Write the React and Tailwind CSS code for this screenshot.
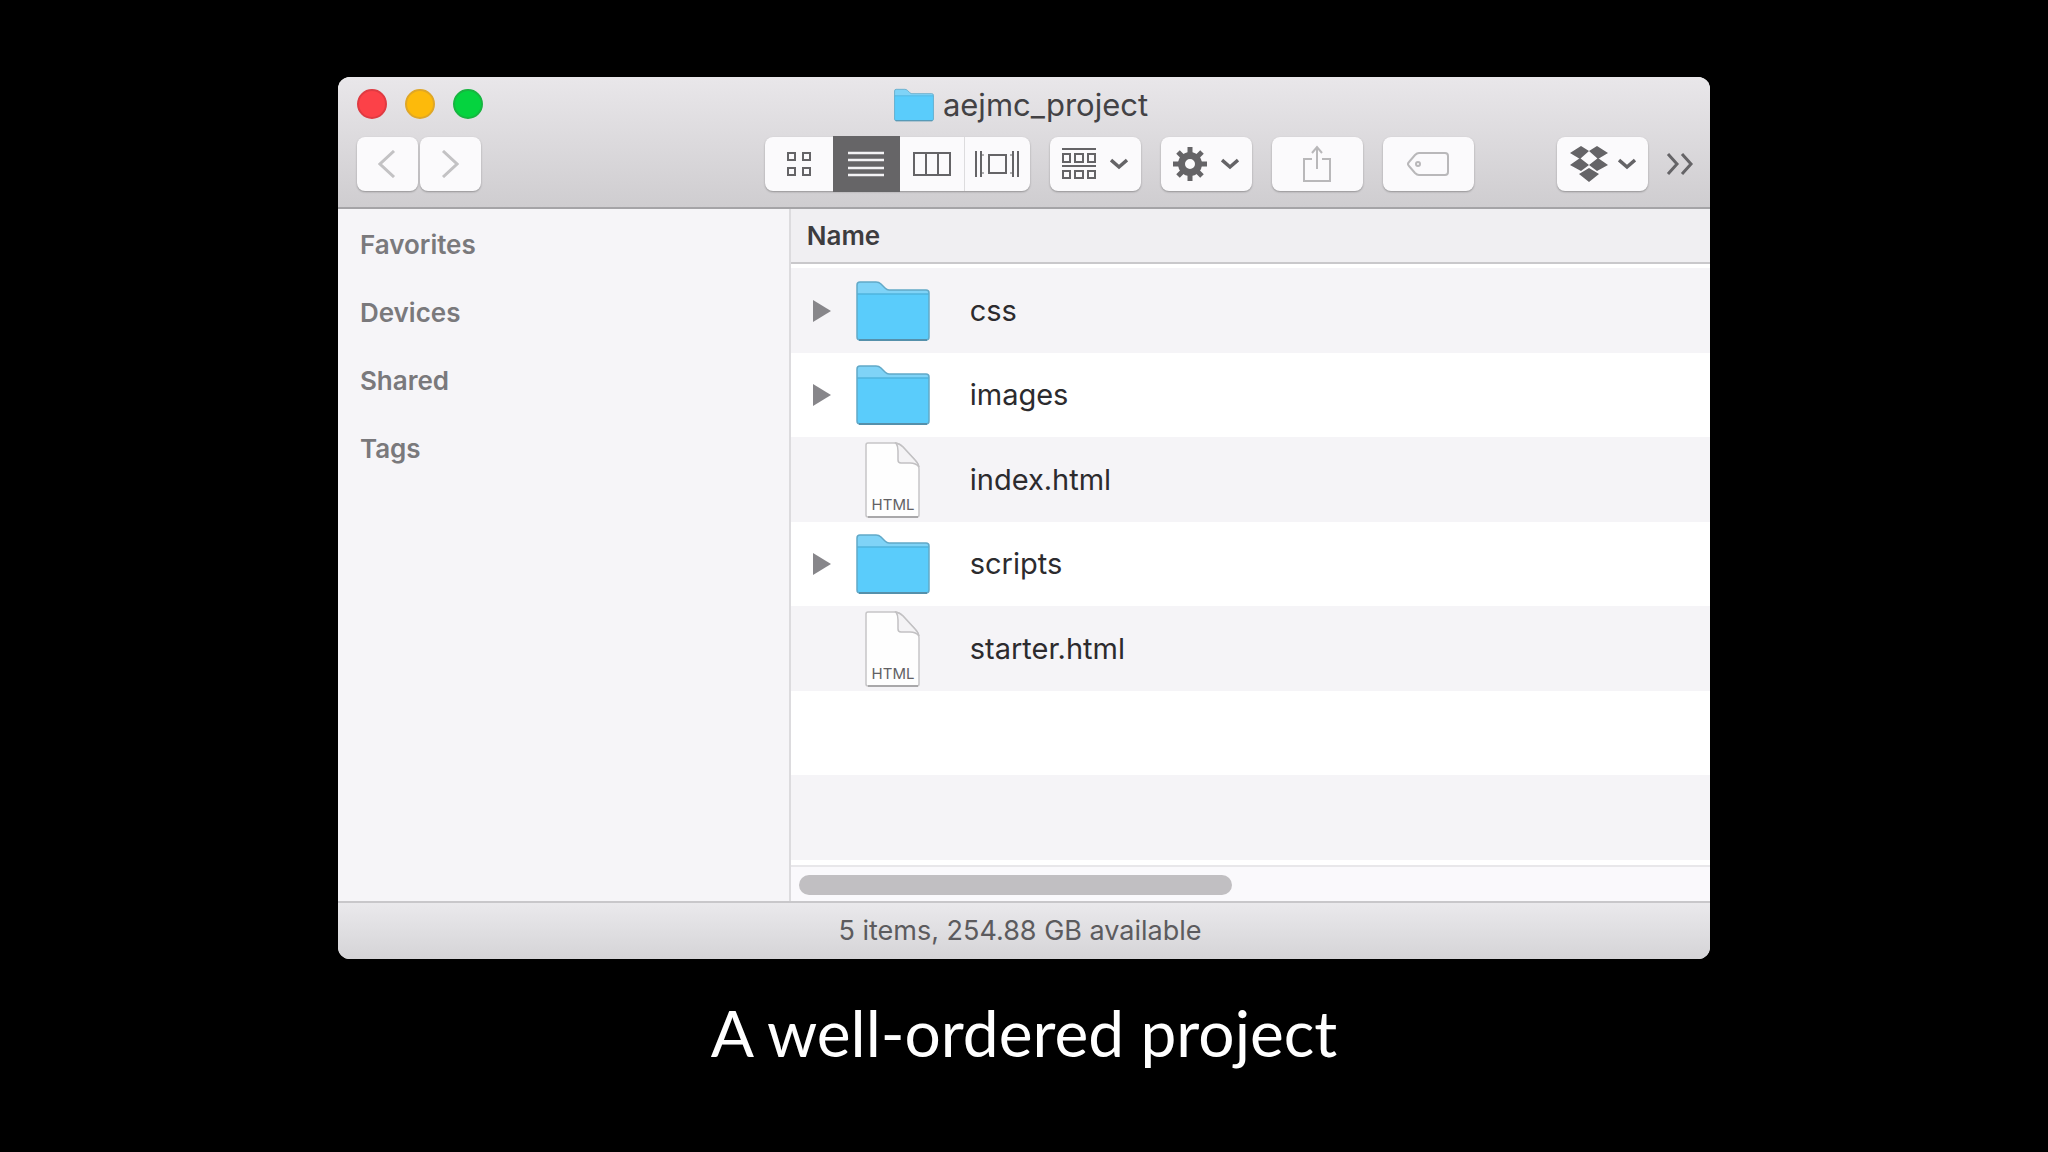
import React, { useState } from 'react';

const sidebarItems = ['Favorites', 'Devices', 'Shared', 'Tags'];

const files = [
  { name: 'css', type: 'folder' },
  { name: 'images', type: 'folder' },
  { name: 'index.html', type: 'html' },
  { name: 'scripts', type: 'folder' },
  { name: 'starter.html', type: 'html' },
];

const FolderIcon = ({ className }) => (
  <svg className={className} viewBox="0 0 74 60" fill="none">
    <path d="M1 4q0-3 3-3h16q3 0 5 2l4 4q2 2 4 2h37q3 0 3 3v44q0 3-3 3H4q-3 0-3-3z" fill="#7fd3f7" />
    <path d="M1 13h72v43q0 3-3 3H4q-3 0-3-3z" fill="#5accfb" />
    <path d="M1 13h72" stroke="#4fb4de" strokeWidth="1.5" />
    <path d="M1 4q0-3 3-3h16q3 0 5 2l4 4q2 2 4 2h37q3 0 3 3v44q0 3-3 3H4q-3 0-3-3z" stroke="#62a9c8" strokeWidth="1.5" />
    <path d="M3 59h68" stroke="#5590ab" strokeWidth="2" />
  </svg>
);

const HtmlFileIcon = () => (
  <svg className="w-14 h-[76px]" viewBox="0 0 56 76">
    <path d="M1 3q0-2 2-2h26q5 0 9 4l12 13q4 4 4 9v46q0 2-2 2H3q-2 0-2-2z" fill="#fefefe" stroke="#c6c5c7" strokeWidth="1.5" />
    <path d="M31 1q2 3 2 8v9q0 3 3 3h9q6 0 9 4q-1-4-4-7L38 5q-3-3-7-4z" fill="#f4f3f5" stroke="#c2c1c3" strokeWidth="1.5" />
    <path d="M3 75h50" stroke="#a9a8aa" strokeWidth="2" />
    <text x="28" y="68" textAnchor="middle" fontSize="15" fill="#626164" className="font-['Inter',sans-serif]">HTML</text>
  </svg>
);

const ChevronDown = () => (
  <svg className="w-[18px] h-3" viewBox="0 0 18 12" fill="none" stroke="#656467" strokeWidth="3.5">
    <path d="M1 2l8 7 8-7" />
  </svg>
);

const IconView = () => (
  <svg className="w-[26px] h-[26px]" viewBox="0 0 26 26" fill="none" stroke="#656467" strokeWidth="2">
    <path d="M2 2h7v7H2zM17 2h7v7h-7zM2 17h7v7H2zM17 17h7v7h-7z" />
  </svg>
);

const ListView = () => (
  <svg className="w-9 h-[26px]" viewBox="0 0 36 26" fill="none" stroke="#f4f3f5" strokeWidth="2.5">
    <path d="M0 2h36M0 9h36M0 17h36M0 24h36" />
  </svg>
);

const ColumnView = () => (
  <svg className="w-10 h-[26px]" viewBox="0 0 40 26" fill="none" stroke="#656467" strokeWidth="2">
    <path d="M2 2h36v22H2zM14 2v22M26 2v22" />
  </svg>
);

const CoverFlowView = () => (
  <svg className="w-11 h-[26px]" viewBox="0 0 44 26" fill="none" stroke="#656467" strokeWidth="2">
    <path d="M14 4h17v18H14z" />
    <path d="M1 0v26M43 0v26" />
    <path d="M6 0v26M38 0v26" />
    <path d="M6 4h3M6 22h3M38 4h-3M38 22h-3" strokeWidth="1" />
  </svg>
);

const ArrangeIcon = () => (
  <svg className="w-[34px] h-8" viewBox="0 0 34 32" fill="none" stroke="#656467" strokeWidth="2">
    <path d="M0 1h34M0 18h34" />
    <path d="M1 6h7v8H1zM13 6h8v8h-8zM26 6h7v8h-7zM1 23h7v7H1zM13 23h8v7h-8zM26 23h7v7h-7z" />
  </svg>
);

const GearIcon = () => (
  <svg className="w-[34px] h-[34px]" viewBox="-17 -17 34 34" fill="none" stroke="#656467">
    <circle r="8.5" strokeWidth="7" />
    <path
      d="M0-10V-17M0 10V17M-10 0H-17M10 0H17M7-7L12-12M-7 7L-12 12M7 7L12 12M-7-7L-12-12"
      strokeWidth="5"
    />
  </svg>
);

const ShareIcon = () => (
  <svg className="w-7 h-[38px]" viewBox="0 0 28 38" fill="none" stroke="#b9b8ba" strokeWidth="2">
    <path d="M9 14H1v22h26V14h-8M14 24V2M9 8l5-6 5 6" />
  </svg>
);

const TagIcon = () => (
  <svg className="w-[42px] h-6" viewBox="0 0 42 24" fill="none" stroke="#b9b8ba" strokeWidth="2">
    <path d="M12 1h26q3 0 3 3v16q0 3-3 3H12q-2 0-4-2l-6-7q-2-2 0-4l6-7q2-2 4-2z" />
    <circle cx="11" cy="12" r="2" />
  </svg>
);

const DropboxIcon = () => (
  <svg className="w-[38px] h-9" viewBox="0 0 38 36" fill="#656467">
    <path d="M11 0l8 5-9 8-10-6zM27 0l-8 5 9 8 10-6zM10 12l9 7-8 6-11-6zM28 12l-9 7 8 6 11-6zM19 22l10 6-10 8-10-8z" />
  </svg>
);

const ToolbarButton = ({ label, disabled, className = 'w-[91px] gap-[14px]', children }) => (
  <button
    type="button"
    aria-label={label}
    disabled={disabled}
    className={`h-[54px] shrink-0 rounded-lg bg-[#fbfafc] shadow-[0_1px_2px_rgba(0,0,0,0.3)] flex items-center justify-center ${className}`}
  >
    {children}
  </button>
);

const viewModes = [
  { id: 'icon', label: 'Icon view', Icon: IconView },
  { id: 'list', label: 'List view', Icon: ListView },
  { id: 'column', label: 'Column view', Icon: ColumnView },
  { id: 'cover', label: 'Cover Flow view', Icon: CoverFlowView },
];

const ViewSwitcher = () => (
  <div className="h-[54px] shrink-0 rounded-lg bg-[#fbfafc] shadow-[0_1px_2px_rgba(0,0,0,0.3)] flex items-center">
    {viewModes.map(({ id, label, Icon }) => (
      <button
        key={id}
        type="button"
        aria-label={label}
        aria-pressed={id === 'list'}
        className={`flex items-center justify-center ${
          id === 'list'
            ? 'w-[67px] h-14 bg-[#666567]'
            : id === 'cover'
            ? 'w-[66px] h-[54px] border-l border-[#dddcde]'
            : id === 'icon'
            ? 'w-[68px] h-[54px]'
            : 'w-16 h-[54px]'
        }`}
      >
        <Icon />
      </button>
    ))}
  </div>
);

const Toolbar = () => (
  <header className="h-[132px] bg-linear-to-b from-[#e9e7ea] to-[#cfcdd0] border-b-2 border-[#a5a4a7]">
    <div className="relative h-14 pr-1.5 flex items-center justify-center">
      <div className="absolute left-[19px] top-3 flex gap-[18px]">
        <button type="button" aria-label="Close" className="size-[30px] rounded-full bg-[#fc4148] border-2 border-[#df3b42]" />
        <button type="button" aria-label="Minimize" className="size-[30px] rounded-full bg-[#fdba0b] border-2 border-[#dfa727]" />
        <button type="button" aria-label="Zoom" className="size-[30px] rounded-full bg-[#05d33f] border-2 border-[#17b540]" />
      </div>
      <h1 className="flex items-center gap-[9px] text-[31px] leading-9 text-[#434245]">
        <FolderIcon className="w-10 h-[34px]" />
        aejmc_project
      </h1>
    </div>
    <div className="mt-1 flex items-center pl-[19px] pr-4">
      <div className="flex gap-[2px]">
        <ToolbarButton label="Back" className="w-[61px]">
          <svg className="w-[18px] h-7" viewBox="0 0 18 28" fill="none" stroke="#c3c2c4" strokeWidth="3">
            <path d="M16 1L2 14l14 13" />
          </svg>
        </ToolbarButton>
        <ToolbarButton label="Forward" className="w-[61px]">
          <svg className="w-[18px] h-7" viewBox="0 0 18 28" fill="none" stroke="#c3c2c4" strokeWidth="3">
            <path d="M2 1l14 13L2 27" />
          </svg>
        </ToolbarButton>
      </div>
      <div className="grow-[17]" />
      <div className="flex gap-5">
        <ViewSwitcher />
        <ToolbarButton label="Arrange items">
          <ArrangeIcon />
          <ChevronDown />
        </ToolbarButton>
        <ToolbarButton label="Actions">
          <GearIcon />
          <ChevronDown />
        </ToolbarButton>
        <ToolbarButton label="Share" disabled>
          <ShareIcon />
        </ToolbarButton>
        <ToolbarButton label="Edit tags" disabled>
          <TagIcon />
        </ToolbarButton>
      </div>
      <div className="grow-[5]" />
      <div className="flex items-center gap-[18px]">
        <ToolbarButton label="Dropbox" className="w-[91px] gap-[10px]">
          <DropboxIcon />
          <ChevronDown />
        </ToolbarButton>
        <button type="button" aria-label="More toolbar items">
          <svg className="w-[28px] h-6" viewBox="0 0 28 24" fill="none" stroke="#656467" strokeWidth="3">
            <path d="M2 2l9 10-9 10M16 2l9 10-9 10" />
          </svg>
        </button>
      </div>
    </div>
  </header>
);

const Sidebar = () => (
  <nav className="w-[33%] shrink-0 bg-[#f6f5f8] border-r-2 border-[#dcdbde] pt-[18px] pl-[22px]">
    <ul className="flex flex-col gap-8 text-[26px] leading-9 font-semibold text-[#7a797c]">
      {sidebarItems.map((item) => (
        <li key={item}>{item}</li>
      ))}
    </ul>
  </nav>
);

const FileList = () => {
  const [expanded, setExpanded] = useState(null);

  return (
    <section className="grow flex flex-col bg-white">
      <table className="w-full border-separate border-spacing-0 text-left">
        <thead>
          <tr>
            <th className="h-[55px] bg-[#f0eff2] border-b-2 border-[#c9c8cb] pl-4 text-[26px] leading-8 font-semibold text-[#3d3c3f]">
              Name
            </th>
          </tr>
        </thead>
        <tbody>
          {files.map(({ name, type }) => (
            <tr key={name} className="group odd:bg-[#f5f4f7]">
              <td className="p-0 border-white group-first:border-t-4">
                <div className="flex items-center group-odd:h-[85px] group-even:h-[84px]">
                  <div className="w-[65px] pl-[22px]">
                    {type === 'folder' && (
                      <button
                        type="button"
                        aria-label={`Expand ${name}`}
                        aria-expanded={expanded === name}
                        onClick={() => setExpanded(expanded === name ? null : name)}
                        className="block"
                      >
                        <svg className="w-[18px] h-[22px]" viewBox="0 0 18 22" fill="#87868a">
                          <path d="M0 0l18 11L0 22z" />
                        </svg>
                      </button>
                    )}
                  </div>
                  <div className="w-[74px] flex justify-center">
                    {type === 'folder' ? <FolderIcon className="w-[74px] h-[60px]" /> : <HtmlFileIcon />}
                  </div>
                  <span className="pl-10 text-[29px] leading-9 text-[#2c2b2e]">{name}</span>
                </div>
              </td>
            </tr>
          ))}
          <tr>
            <td className="h-[84px]" />
          </tr>
          <tr>
            <td className="h-[85px] bg-[#f5f4f7]" />
          </tr>
        </tbody>
      </table>
      {/* Horizontal scrollbar */}
      <div className="mt-[5px] h-9 border-t-2 border-[#e8e7ea] bg-[#faf9fc] px-2 pt-2">
        <div className="w-[48%] h-5 rounded-full bg-[#c1bfc2]" />
      </div>
    </section>
  );
};

export default function App() {
  return (
    <main className="min-h-screen bg-black pt-[77px] flex flex-col items-center font-['Inter',sans-serif]">
      <div className="w-[67%] rounded-xl overflow-hidden bg-white">
        <Toolbar />
        <div className="flex">
          <Sidebar />
          <FileList />
        </div>
        <footer className="h-[58px] pr-2 border-t-2 border-[#c8c7ca] bg-linear-to-b from-[#eae9ec] to-[#d5d4d7] flex items-center justify-center text-[27px] leading-8 text-[#5c5b5e]">
          5 items, 254.88 GB available
        </footer>
      </div>
      <p className="mt-9 text-[64px] leading-[76px] text-white font-['Lato',sans-serif]">A well-ordered project</p>
    </main>
  );
}
